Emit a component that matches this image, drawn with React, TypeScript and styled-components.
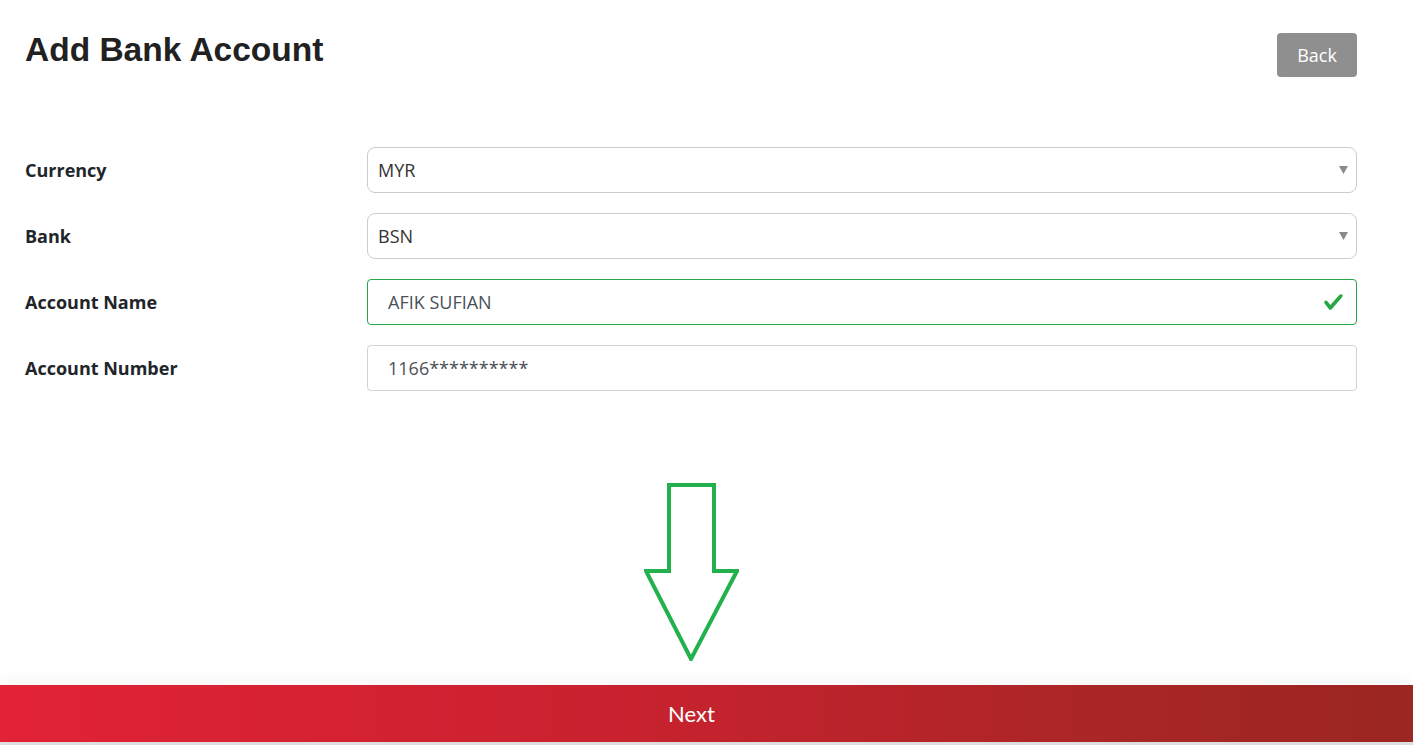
import React from "react";
import styled, { createGlobalStyle } from "styled-components";

const Global = createGlobalStyle`
  html, body {
    margin: 0;
    padding: 0;
    background: #fff;
  }
  * { box-sizing: border-box; }
`;

const Page = styled.div`
  min-height: 100vh;
  display: flex;
  flex-direction: column;
  font-family: "Open Sans", "Noto Sans", sans-serif;
  color: #212529;
`;

const Content = styled.main`
  flex: 1;
  padding: 0 56px 0 25px;
  display: flex;
  flex-direction: column;
`;

const Header = styled.header`
  display: flex;
  justify-content: space-between;
  align-items: flex-start;
  padding-top: 28px;
`;

const Title = styled.h1`
  margin: 0;
  font-family: "Liberation Sans", Arial, sans-serif;
  font-weight: 700;
  font-size: 33.5px;
  line-height: 44px;
  color: #212121;
`;

const BackButton = styled.button`
  margin-top: 5px;
  width: 80px;
  height: 44px;
  border: none;
  border-radius: 4px;
  background: #8f8f8f;
  color: #fff;
  font-family: "Open Sans", sans-serif;
  font-size: 18px;
  cursor: pointer;
`;

const Form = styled.form`
  margin-top: 70px;
  display: grid;
  grid-template-columns: 342px 1fr;
  row-gap: 20px;
  align-items: center;
`;

const Label = styled.label`
  font-size: 18px;
  font-weight: 700;
  color: #212529;
`;

const Field = styled.div`
  position: relative;
`;

const Select = styled.select`
  appearance: none;
  width: 100%;
  height: 46px;
  padding: 0 30px 0 10px;
  border: 1px solid #cccccc;
  border-radius: 8px;
  background: #fff;
  font-family: "Open Sans", sans-serif;
  font-size: 18px;
  color: #333;
  outline: none;
`;

const Caret = styled.svg`
  position: absolute;
  right: 9px;
  top: 50%;
  transform: translateY(-50%);
  width: 9px;
  height: 8px;
  pointer-events: none;
`;

const Input = styled.input<{ $valid?: boolean }>`
  width: 100%;
  height: 46px;
  padding: 0 40px 0 20px;
  border: 1px solid ${(p) => (p.$valid ? "#28a745" : "#ced4da")};
  border-radius: 4px;
  font-family: "Open Sans", sans-serif;
  font-size: 18px;
  color: #495057;
  outline: none;
`;

const CheckIcon = styled.svg`
  position: absolute;
  right: 13px;
  top: 50%;
  transform: translateY(-50%);
  width: 21px;
  height: 21px;
`;

const ArrowWrap = styled.div`
  margin-top: 92px;
  display: flex;
  justify-content: center;
`;

const ArrowSvg = styled.svg`
  width: 95px;
  height: 178px;
`;

const NextBar = styled.button`
  height: 60px;
  width: 100%;
  border: none;
  border-bottom: 3px solid #dedede;
  padding: 0 30px 0 0;
  background: linear-gradient(90deg, #e22237 0%, #c8222f 45%, #a82626 80%, #9b2622 100%);
  color: #fff;
  font-family: "Lato", sans-serif;
  font-size: 22px;
  box-shadow: 0 -6px 14px rgba(0, 0, 0, 0.035);
  cursor: pointer;
`;

const DownCaret = () => (
  <Caret viewBox="0 0 9 8">
    <polygon points="0,0 9,0 4.5,8" fill="#8a8a8a" />
  </Caret>
);

export default function App() {
  return (
    <Page>
      <Global />
      <Content>
        <Header>
          <Title>Add Bank Account</Title>
          <BackButton type="button">Back</BackButton>
        </Header>
        <Form onSubmit={(e) => e.preventDefault()}>
          <Label>Currency</Label>
          <Field>
            <Select defaultValue="MYR">
              <option>MYR</option>
            </Select>
            <DownCaret />
          </Field>

          <Label>Bank</Label>
          <Field>
            <Select defaultValue="BSN">
              <option>BSN</option>
            </Select>
            <DownCaret />
          </Field>

          <Label>Account Name</Label>
          <Field>
            <Input $valid defaultValue="AFIK SUFIAN" />
            <CheckIcon viewBox="0 0 8 8">
              <path
                fill="#28a745"
                d="M2.3 6.73L.6 4.53c-.4-1.04.46-1.4 1.1-.8l1.1 1.4 3.4-3.8c.6-.63 1.6-.27 1.2.7l-4 4.6c-.43.5-.8.4-1.1.1z"
              />
            </CheckIcon>
          </Field>

          <Label>Account Number</Label>
          <Field>
            <Input defaultValue="1166**********" />
          </Field>
        </Form>
        <ArrowWrap>
          <ArrowSvg viewBox="0 0 95 178">
            <polygon
              points="25,2 70,2 70,88 93,88 47,176 2,88 25,88"
              fill="none"
              stroke="#22b14c"
              strokeWidth="4"
              strokeLinejoin="miter"
            />
          </ArrowSvg>
        </ArrowWrap>
      </Content>
      <NextBar type="button">Next</NextBar>
    </Page>
  );
}
